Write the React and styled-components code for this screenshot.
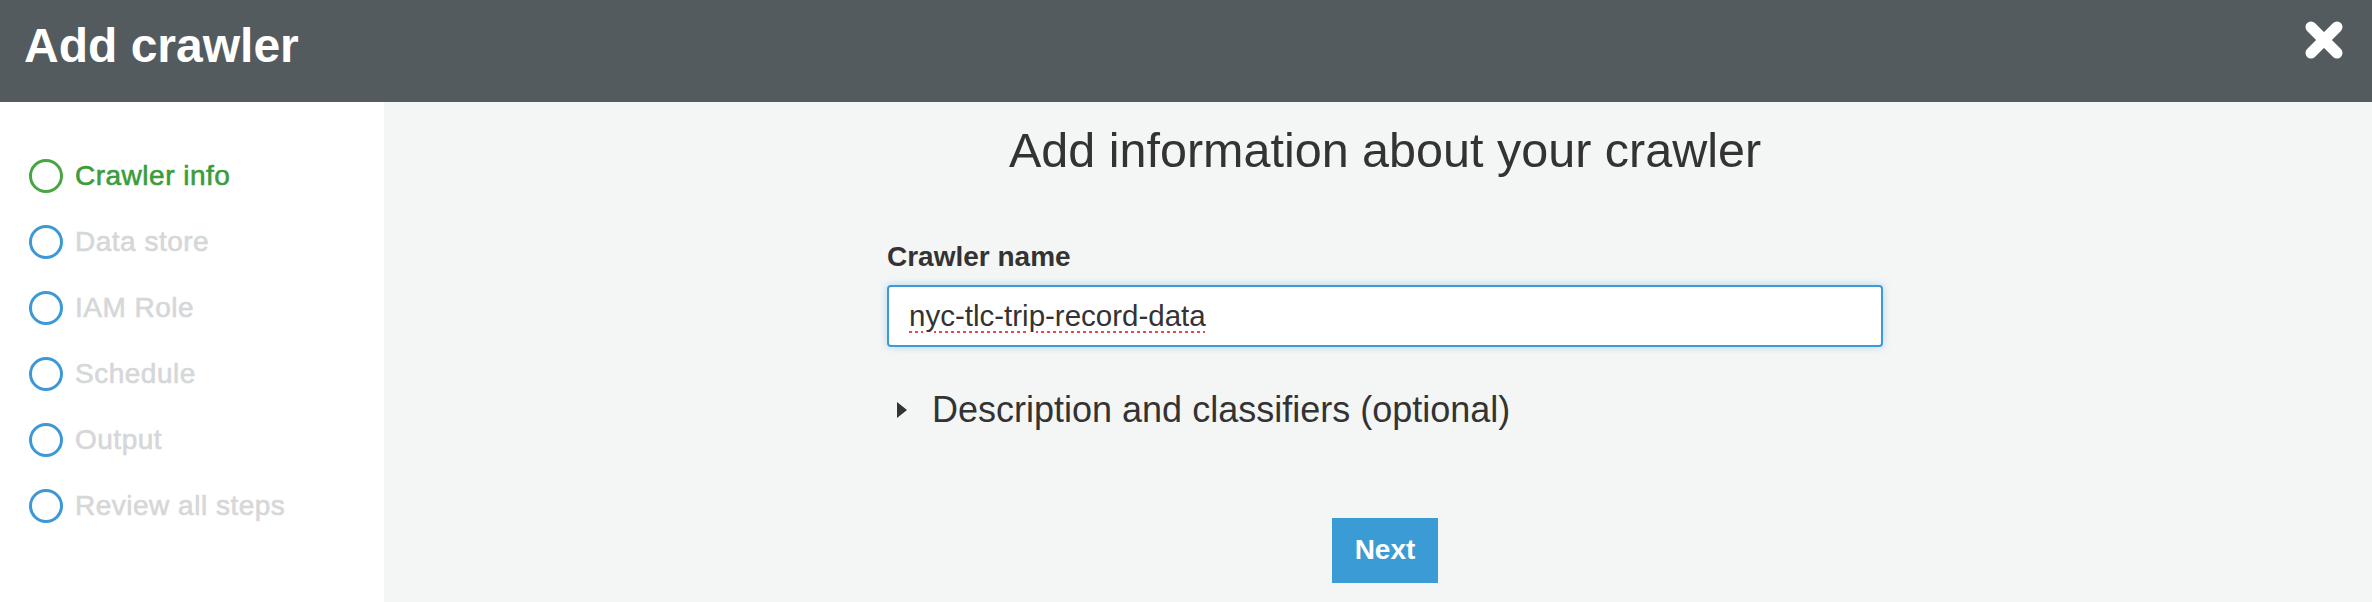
import React from 'react';
import styled, { createGlobalStyle } from 'styled-components';

const steps = [
  'Crawler info',
  'Data store',
  'IAM Role',
  'Schedule',
  'Output',
  'Review all steps'
];

const GlobalStyle = createGlobalStyle`
  html, body {
    margin: 0;
    padding: 0;
    font-family: "Liberation Sans", Arial, sans-serif;
    background-color: #f4f6f6;
  }
  * {
    box-sizing: border-box;
  }
`;

const CloseIcon = () => (
  <svg width="38" height="38" viewBox="0 0 38 38">
    <path d="M6 6 L32 32 M32 6 L6 32" stroke="#fff" strokeWidth="11" strokeLinecap="round" fill="none" />
  </svg>
);

const App = () => (
  <Page>
    <GlobalStyle />
    <Header>
      <Title>Add crawler</Title>
      <CloseBtn aria-label="Close">
        <CloseIcon />
      </CloseBtn>
    </Header>
    <Body>
      <Sidebar>
        {steps.map((step, i) => (
          <Step key={step}>
            <StepCircle active={i === 0} />
            <StepLabel active={i === 0}>{step}</StepLabel>
          </Step>
        ))}
      </Sidebar>
      <Main>
        <Heading>Add information about your crawler</Heading>
        <Form>
          <Label htmlFor="crawler-name">Crawler name</Label>
          <NameInput id="crawler-name" defaultValue="nyc-tlc-trip-record-data" />
          <Disclosure>
            <Caret />
            Description and classifiers (optional)
          </Disclosure>
        </Form>
        <NextBtn>Next</NextBtn>
      </Main>
    </Body>
  </Page>
);

const Page = styled.div`
  min-height: 100vh;
  display: flex;
  flex-direction: column;
`;

const Header = styled.header`
  height: 102px;
  flex-shrink: 0;
  display: flex;
  align-items: center;
  justify-content: space-between;
  padding: 0 29px 12px 24px;
  background-color: #545b5e;
`;

const Title = styled.h1`
  margin: 0;
  font-size: 48px;
  font-weight: 700;
  color: #fff;
`;

const CloseBtn = styled.button`
  display: flex;
  padding: 0;
  margin-bottom: 10px;
  border: 0;
  background: none;
  cursor: pointer;
`;

const Body = styled.div`
  flex: 1;
  display: flex;
`;

const Sidebar = styled.nav`
  width: 384px;
  flex-shrink: 0;
  padding: 41px 0 0 29px;
  background-color: #fff;
`;

const Step = styled.div`
  height: 66px;
  display: flex;
  align-items: center;
  gap: 12px;
`;

const StepCircle = styled.span`
  width: 34px;
  height: 34px;
  border-radius: 50%;
  border: 3px solid ${(p) => (p.active ? '#48a543' : '#3d98d6')};
`;

const StepLabel = styled.span`
  font-size: 28px;
  letter-spacing: 0.5px;
  color: ${(p) => (p.active ? '#3a9c3c' : '#d5d7d8')};
  -webkit-text-stroke: 0.6px ${(p) => (p.active ? '#3a9c3c' : '#d5d7d8')};
`;

const Main = styled.main`
  flex: 1;
  display: flex;
  flex-direction: column;
  align-items: center;
  padding: 19px 0 0 14px;
`;

const Heading = styled.h2`
  margin: 0;
  font-size: 48.5px;
  font-weight: 400;
  line-height: 1.2;
  color: #333;
`;

const Form = styled.div`
  width: 996px;
  margin-top: 62px;
  display: flex;
  flex-direction: column;
`;

const Label = styled.label`
  font-size: 28px;
  font-weight: 700;
  line-height: 1.15;
  color: #333;
`;

const NameInput = styled.input`
  margin-top: 12px;
  height: 62px;
  padding: 0 20px;
  border: 2px solid #3c9ad6;
  border-radius: 4px;
  background-color: #fff;
  box-shadow: 0 0 8px rgba(60, 154, 214, 0.35);
  outline: 0;
  font-family: "Liberation Sans", Arial, sans-serif;
  font-size: 29.5px;
  color: #333;
  text-decoration: underline dotted #e8474c;
  text-decoration-thickness: 3px;
  text-underline-offset: 5px;
`;

const Disclosure = styled.div`
  margin-top: 42px;
  padding-left: 10px;
  display: flex;
  align-items: center;
  gap: 25px;
  font-size: 36px;
  line-height: 1.15;
  color: #333;
`;

const Caret = styled.span`
  width: 0;
  height: 0;
  border-top: 8.5px solid transparent;
  border-bottom: 8.5px solid transparent;
  border-left: 10px solid #333;
`;

const NextBtn = styled.button`
  margin-top: 87px;
  height: 65px;
  padding: 0 23px;
  border: 0;
  background-color: #3a9bd5;
  color: #fff;
  font-family: "Liberation Sans", Arial, sans-serif;
  font-size: 28px;
  font-weight: 700;
  cursor: pointer;
`;

export default App;
